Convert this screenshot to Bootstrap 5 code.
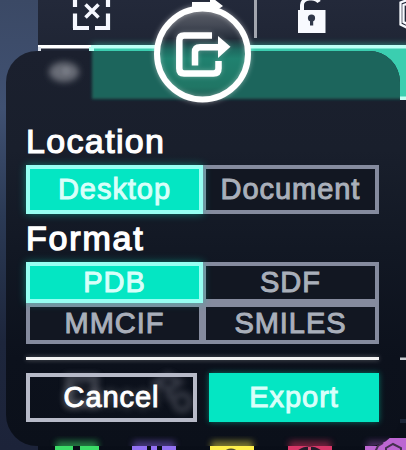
<!DOCTYPE html>
<html lang="en">
<head>
<meta charset="utf-8">
<meta name="viewport" content="width=device-width, initial-scale=1">
<title>Export</title>
<link href="https://cdn.jsdelivr.net/npm/bootstrap@5.3.0/dist/css/bootstrap.min.css" rel="stylesheet">
<style>
body{width:406px;height:450px;background:linear-gradient(#3b4965,#405172 24%,#2b3a55 48%,#1d263c 76%,#1c2339);font-family:"Liberation Sans",Arial,sans-serif;color:#fff}
.scene{z-index:0}
.export-panel{z-index:1;width:394px;height:395px;margin:51px 0 0 6px;padding:70px 21px 0 20px;border-radius:31px;background:linear-gradient(#1b202e,#191f2c 25%,#121824 50%,#0c111c 78%,#0b101a)}
.haze{z-index:0}
.panel-body{z-index:1}
.emblem{z-index:2;left:144px;top:0}
.section-title{font-size:34px;line-height:40px;font-weight:400;letter-spacing:1.35px;margin:0;-webkit-text-stroke:1.2px #fff}
.title-location{height:44px}
.title-format{height:48px;padding-top:4px;letter-spacing:1.8px;-webkit-text-stroke-width:1.4px}
.choices{display:grid;grid-template-columns:177px 176px}
.choice,.action{border-radius:0;padding:0;font-size:29px;line-height:1;letter-spacing:.95px;display:flex;align-items:center;justify-content:center}
.choice,.choice:hover{color:#a9afba;border:4px solid #858b9e;border-left-width:3px;background:#121722;-webkit-text-stroke:1px #a9afba}
.choice.picked,.choice.picked:hover{color:#d9fffa;background:#04e6c3;border:4px solid #96fff2;box-shadow:0 0 8px #00ddb877;position:relative;z-index:1;-webkit-text-stroke-color:#d9fffa}
.tall{height:49px}
.short{height:41px}
.low-left,.low-left:hover{border-left-width:4px}
.rule{height:3px;background:#f4f4f4;margin:13px 0;box-shadow:0 0 5px #ffffff55}
.actions{display:grid;grid-template-columns:171px 170px;gap:12px}
.action{height:49px}
.cancel,.cancel:hover{color:#fff;border:4px solid #b7bac8;background:transparent;text-shadow:0 0 9px #ffffff66;-webkit-text-stroke:1px #fff}
.send,.send:hover{color:#d9fffa;background:#04e6c3;border:0;box-shadow:0 0 6px #00ddb877;-webkit-text-stroke:1px #d9fffa}
</style>
<script src="https://cdn.jsdelivr.net/npm/bootstrap@5.3.0/dist/js/bootstrap.bundle.min.js"></script>
</head>
<body class="position-relative overflow-hidden d-flex align-items-start">
<!-- Toolbar and palette behind the dialog -->
<svg class="scene position-absolute top-0 start-0" width="406" height="450" viewBox="0 0 406 450" aria-hidden="true">
  <defs>
    <linearGradient id="bar" x1="0" y1="0" x2="0" y2="1"><stop offset="0" stop-color="#23293a"/><stop offset=".25" stop-color="#1a202d"/><stop offset="1" stop-color="#090e18"/></linearGradient>
    <filter id="glow" x="-20%" y="-300%" width="140%" height="700%"><feGaussianBlur stdDeviation="3"/></filter>
  </defs>
  <rect x="38" width="368" height="450" fill="url(#bar)"/>
  <g fill="none" stroke="#f6f8ff" stroke-width="4.2">
    <path d="M75 -2V7M75 13.500V28M73 28H89M95 28H110M108 30V13.500M108 7V-2" />
    <path d="M85.500 4.500L98.500 17.500M98.500 4.500L85.500 17.500" stroke-width="3.600"/>
  </g>
  <path d="M192 2H210V-4L223 6L210 15H192Z" fill="#fff"/>
  <rect x="254" width="3" height="38" fill="#a2a5ae"/>
  <path d="M302 11V5C302 -2 315 -4 319 2" fill="none" stroke="#f8faff" stroke-width="4"/>
  <path d="M298 10H325.500V33H298Z" fill="#f8faff"/>
  <circle cx="311.500" cy="18" r="3.600" fill="#30384a"/><rect x="310" y="18" width="3.200" height="7.500" fill="#30384a"/>
  <path d="M410 -1L400.500 2.500V24.500L410 29M407 4L403.500 5V22L407 24" fill="none" stroke="#f7faff" stroke-width="2.300"/>
  <rect x="92" y="44" width="320" height="6" fill="#3edcc0" filter="url(#glow)" opacity=".5"/>
  <rect x="92" y="47" width="320" height="51" fill="#3bceb0"/>
  <rect x="38" y="45" width="53" height="3.500" fill="#fff"/>
  <rect x="38" y="47" width="3" height="4.500" fill="#dce1e9"/>
  <rect x="89" y="47" width="5" height="5" fill="#bafff2"/>
  <rect x="91" y="45" width="315" height="3.500" fill="#bdfff5"/>
  <rect x="399" y="96.500" width="7" height="3.500" fill="#c1fff3"/>
  <rect x="400" y="357.500" width="6" height="2.500" fill="#c8cbd0"/>
  <rect x="400" y="419" width="6" height="4" fill="#1c2637"/>
  <path d="M55 446H73V451H55ZM80 446H99V451H80Z" fill="#3bde67"/>
  <path d="M132 446H147V451H132ZM151 446H157V451H151ZM162 446H176V451H162Z" fill="#9371f4"/>
  <path d="M210 446H254V451H210Z" fill="#fff04b"/><ellipse cx="231" cy="452" rx="6" ry="3.500" fill="#514d2e"/>
  <path d="M288 446H332V451H288Z" fill="#d83667"/><path d="M297 451C304 445 315 445 322 451Z" fill="#251c2b"/><rect x="308" y="447" width="3" height="4" fill="#db4871"/>
  <path d="M365 446H378L386 438H406V451H365Z" fill="#bd66d2"/>
  <path d="M375 452L378 446L383 443M386 452V448L393 444L401 448V452" fill="none" stroke="#45304f" stroke-width="2"/>
</svg>

<main class="export-panel position-relative">
  <!-- Frosted shapes seen through the panel -->
  <svg class="haze position-absolute top-0 start-0" width="394" height="395" viewBox="6 51 394 395" aria-hidden="true">
    <defs>
      <clipPath id="panelShape"><rect x="6" y="51" width="394" height="395" rx="31"/></clipPath>
      <filter id="soft2" x="-20%" y="-50%" width="140%" height="200%"><feGaussianBlur stdDeviation="1.800"/></filter>
      <filter id="soft4" x="-40%" y="-40%" width="180%" height="180%"><feGaussianBlur stdDeviation="3.200"/></filter>
    </defs>
    <g clip-path="url(#panelShape)">
      <rect x="92" y="35" width="330" height="64" fill="#1d655b" filter="url(#soft2)"/>
      <ellipse cx="64" cy="72" rx="15" ry="10" fill="#696d77" filter="url(#soft4)"/>
      <circle cx="66" cy="71" r="4" fill="#858993" filter="url(#soft2)" opacity=".4"/>
      <g filter="url(#soft4)" opacity=".4">
        <path d="M69 378H95V404H69Z" fill="none" stroke="#838590" stroke-width="8"/>
        <path d="M156 382L168 375L180 382L169 390ZM169 390V400" fill="none" stroke="#777986" stroke-width="6"/>
        <circle cx="182" cy="402" r="8" fill="none" stroke="#858793" stroke-width="5"/>
      </g>
      <g filter="url(#soft4)" opacity=".55">
        <rect x="56" y="441" width="42" height="12" fill="#39ce62"/>
        <rect x="133" y="441" width="42" height="12" fill="#7656ca"/>
        <rect x="211" y="441" width="42" height="12" fill="#d8cb41"/>
        <rect x="289" y="441" width="42" height="12" fill="#c82d59"/>
        <rect x="367" y="441" width="40" height="12" fill="#80449a"/>
      </g>
    </g>
  </svg>

  <form class="panel-body position-relative">
    <h2 class="section-title title-location">Location</h2>
    <div class="choices">
      <button type="button" class="btn choice tall picked">Desktop</button>
      <button type="button" class="btn choice tall">Document</button>
    </div>
    <h2 class="section-title title-format">Format</h2>
    <div class="choices">
      <button type="button" class="btn choice short picked">PDB</button>
      <button type="button" class="btn choice short">SDF</button>
      <button type="button" class="btn choice short low-left">MMCIF</button>
      <button type="button" class="btn choice short">SMILES</button>
    </div>
    <div class="rule"></div>
    <div class="actions">
      <button type="button" class="btn action cancel">Cancel</button>
      <button type="button" class="btn action send">Export</button>
    </div>
  </form>
</main>

<!-- Export emblem straddling the panel's top edge -->
<svg class="emblem position-absolute" width="118" height="115" viewBox="144 0 118 115" role="img" aria-label="Export">
  <defs>
    <linearGradient id="disc" x1="0" y1="0" x2="0" y2="1"><stop offset="0" stop-color="#5d6069"/><stop offset=".18" stop-color="#454a56"/><stop offset=".33" stop-color="#252d3a"/><stop offset=".46" stop-color="#1e6b61"/><stop offset=".55" stop-color="#20816f"/><stop offset=".86" stop-color="#207665"/><stop offset="1" stop-color="#205c54"/></linearGradient>
    <filter id="halo" x="-20%" y="-20%" width="140%" height="140%"><feGaussianBlur stdDeviation="2.500"/></filter>
  </defs>
  <circle cx="202.500" cy="54" r="45.500" fill="url(#disc)"/>
  <g fill="none" stroke="#fff" stroke-width="6.500">
    <circle cx="202.500" cy="54" r="45.500" filter="url(#halo)" opacity=".4"/>
    <circle cx="202.500" cy="54" r="45.500" stroke-width="6"/>
    <g id="share">
      <path d="M212 35.500H184Q179.300 35.500 179.300 40.500V68.500Q179.300 73.500 184 73.500H213.500Q218.500 73.500 218.500 68.500V61"/>
      <path d="M195 65.500V52Q195 47.200 200 47.200H220"/>
      <path d="M218 36L230.500 46.800L218 58Z" fill="#fff" stroke="none"/>
    </g>
    <use href="#share" filter="url(#halo)" opacity=".3"/>
  </g>
</svg>
</body>
</html>
